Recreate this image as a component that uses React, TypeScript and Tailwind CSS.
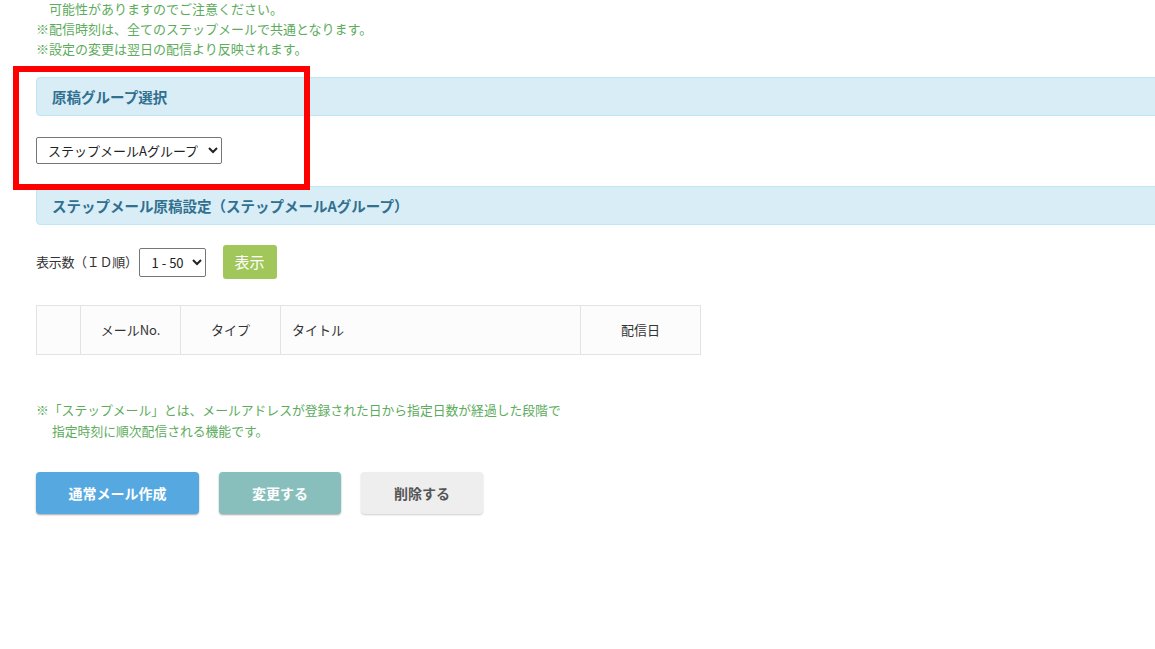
import { useState } from 'react';

const font = { fontFamily: '"Noto Sans CJK JP", "Noto Sans", sans-serif' };

function SectionHeader({ title }: { title: string }) {
  return (
    <div className="h-[39px] -mr-[10px] flex items-center pl-[15px] bg-[#d9edf7] border border-[#bce8f1] rounded-l-[4px] text-[14.5px] font-bold text-[#31708f]">
      {title}
    </div>
  );
}

function App() {
  const [group, setGroup] = useState('a');
  const [range, setRange] = useState('1');

  return (
    <div className="relative w-[1155px] h-[649px] overflow-hidden bg-white" style={font}>
      <div className="pl-[36px]">
        <div className="-mt-px text-[13px] leading-[20px] text-[#5cac5c]">
          <p className="pl-[13px]">可能性がありますのでご注意ください。</p>
          <p>※配信時刻は、全てのステップメールで共通となります。</p>
          <p>※設定の変更は翌日の配信より反映されます。</p>
        </div>

        <div className="mt-[18px]">
          <SectionHeader title="原稿グループ選択" />
        </div>

        <select
          value={group}
          onChange={e => setGroup(e.target.value)}
          className="mt-[21px] block w-[186px] h-[27px] pl-[7px] border border-[#767676] rounded-[2px] text-[13px] text-[#222] bg-white"
        >
          <option value="a">ステップメールAグループ</option>
          <option value="b">ステップメールBグループ</option>
        </select>

        <div className="mt-[22px]">
          <SectionHeader title="ステップメール原稿設定（ステップメールAグループ）" />
        </div>

        <div className="mt-[20px] flex items-center h-[34px]">
          <span className="text-[13px] text-[#333] tracking-[-0.3px]">表示数（ＩＤ順）</span>
          <select
            value={range}
            onChange={e => setRange(e.target.value)}
            className="ml-[1px] w-[67px] h-[29px] pl-[8px] border border-[#767676] rounded-[2px] text-[13px] text-[#222] bg-white"
          >
            <option value="1">1 - 50</option>
            <option value="2">51 - 100</option>
          </select>
          <button
            type="button"
            className="ml-[17px] w-[54px] h-[34px] rounded-[3px] bg-[#a1c75a] text-white text-[15px]"
          >
            表示
          </button>
        </div>

        <table className="mt-[26px] border-collapse text-[13px] text-[#333] bg-[#fcfcfc]">
          <thead>
            <tr className="h-[49px]">
              <th className="w-[44px] border border-[#e3e3e3] font-normal" />
              <th className="w-[100px] border border-[#e3e3e3] font-normal text-center">メールNo.</th>
              <th className="w-[100px] border border-[#e3e3e3] font-normal text-center">タイプ</th>
              <th className="w-[300px] border border-[#e3e3e3] font-normal text-left pl-[11px]">タイトル</th>
              <th className="w-[120px] border border-[#e3e3e3] font-normal text-center">配信日</th>
            </tr>
          </thead>
        </table>

        <div className="mt-[44px] text-[12.8px] leading-[21px] text-[#5cac5c]">
          <p>※「ステップメール」とは、メールアドレスが登録された日から指定日数が経過した段階で</p>
          <p className="pl-[16px]">指定時刻に順次配信される機能です。</p>
        </div>

        <div className="mt-[31px] flex gap-[20px]">
          <button
            type="button"
            className="w-[163px] h-[42px] rounded-[4px] bg-[#55a9e0] text-white text-[14px] font-bold shadow-[0_1px_2px_rgba(0,0,0,0.35)]"
          >
            通常メール作成
          </button>
          <button
            type="button"
            className="w-[122px] h-[42px] rounded-[4px] bg-[#88bfbd] text-white text-[14px] font-bold shadow-[0_1px_2px_rgba(0,0,0,0.35)]"
          >
            変更する
          </button>
          <button
            type="button"
            className="w-[122px] h-[42px] rounded-[4px] bg-[#eeeeee] text-[#555] text-[14px] font-bold shadow-[0_1px_2px_rgba(0,0,0,0.2)]"
          >
            削除する
          </button>
        </div>
      </div>

      {/* annotation frame */}
      <div className="absolute left-[13px] top-[66px] w-[297px] h-[124px] border-[6px] border-[#ff0000] pointer-events-none" />
    </div>
  );
}

export default App;
